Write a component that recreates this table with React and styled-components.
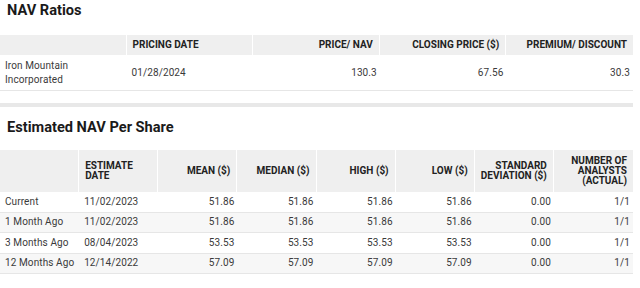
import React from "react";
import styled, { createGlobalStyle } from "styled-components";

const Global = createGlobalStyle`
  html, body { margin: 0; padding: 0; background: #fff; }
  body { font-family: Roboto, "Liberation Sans", Arial, sans-serif; color: #333; }
`;

const Page = styled.div`
  width: 633px;
  display: flex;
  flex-direction: column;
`;

const Title = styled.h2`
  margin: ${(p) => p.$margin || "0"};
  padding-left: 7px;
  font-size: 14.6px;
  line-height: 20px;
  font-weight: 700;
  color: #1a1a1a;
`;

const Table = styled.table`
  width: 633px;
  border-collapse: separate;
  border-spacing: 0;
  table-layout: fixed;
`;

const Th = styled.th`
  background: #efefef;
  border-right: 1px solid #fff;
  height: ${(p) => p.$h}px;
  padding: 0 6px;
  font-size: 10px;
  line-height: 10px;
  font-weight: 700;
  text-transform: uppercase;
  color: #222;
  text-align: ${(p) => p.$align || "left"};
  vertical-align: middle;
  &:last-child { border-right: none; }
`;

const Td = styled.td`
  height: ${(p) => p.$h}px;
  padding: ${(p) => (p.$align === "right" ? "0 3px 0 5px" : "0 5px")};
  font-size: 10px;
  line-height: 14px;
  letter-spacing: 0.1px;
  color: #3a3a3a;
  white-space: ${(p) => (p.$wrap ? "normal" : "nowrap")};
  text-align: ${(p) => p.$align || "left"};
  vertical-align: middle;
  border-bottom: 1px solid #e6e6e6;
  background: ${(p) => (p.$striped ? "#f7f7f7" : "transparent")};
`;

const Divider = styled.div`
  margin-top: 12px;
  height: 4px;
  background: #e8e8e8;
`;

const navHead = [
  ["", "left"],
  ["Pricing Date", "left"],
  ["Price/ NAV", "right"],
  ["Closing Price ($)", "right"],
  ["Premium/ Discount", "right"],
];

const estHead = [
  ["", "left"],
  ["Estimate Date", "left"],
  ["Mean ($)", "right"],
  ["Median ($)", "right"],
  ["High ($)", "right"],
  ["Low ($)", "right"],
  ["Standard Deviation ($)", "right"],
  ["Number of Analysts (Actual)", "right"],
];

const estRows = [
  ["Current", "11/02/2023", "51.86", "51.86", "51.86", "51.86", "0.00", "1/1"],
  ["1 Month Ago", "11/02/2023", "51.86", "51.86", "51.86", "51.86", "0.00", "1/1"],
  ["3 Months Ago", "08/04/2023", "53.53", "53.53", "53.53", "53.53", "0.00", "1/1"],
  ["12 Months Ago", "12/14/2022", "57.09", "57.09", "57.09", "57.09", "0.00", "1/1"],
];

const navRow = ["Iron Mountain Incorporated", "01/28/2024", "130.3", "67.56", "30.3"];

export default function App() {
  return (
    <Page>
      <Global />
      <Title $margin="0 0 15px">NAV Ratios</Title>
      <Table>
        <thead>
          <tr>
            {navHead.map(([t, a], i) => (
              <Th key={i} $align={a} $h={20}>{t}</Th>
            ))}
          </tr>
        </thead>
        <tbody>
          <tr>
            {navRow.map((v, i) => (
              <Td key={i} $h={35} $wrap $align={navHead[i][1]}>{v}</Td>
            ))}
          </tr>
        </tbody>
      </Table>
      <Divider />
      <Title $margin="10px 0 13px">Estimated NAV Per Share</Title>
      <Table>
        <thead>
          <tr>
            {estHead.map(([t, a], i) => (
              <Th key={i} $align={a} $h={42}>{t}</Th>
            ))}
          </tr>
        </thead>
        <tbody>
          {estRows.map((r, ri) => (
            <tr key={ri}>
              {r.map((v, i) => (
                <Td key={i} $h={19.5} $align={estHead[i][1]} $striped={ri % 2 === 1}>
                  {v}
                </Td>
              ))}
            </tr>
          ))}
        </tbody>
      </Table>
    </Page>
  );
}
